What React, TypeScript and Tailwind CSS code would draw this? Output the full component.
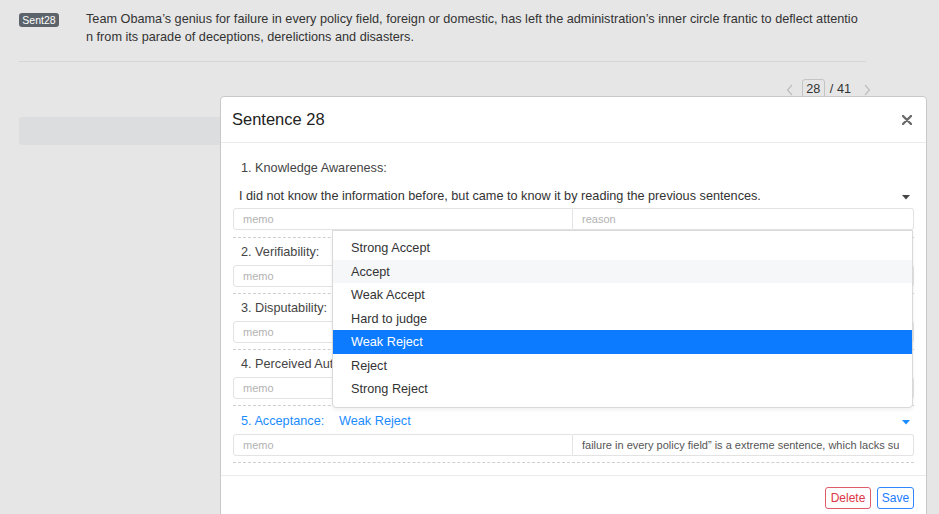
import React from "react";

const font = { fontFamily: '"Liberation Sans", Arial, sans-serif' };

const options = [
  "Strong Accept",
  "Accept",
  "Weak Accept",
  "Hard to judge",
  "Weak Reject",
  "Reject",
  "Strong Reject",
];

function Caret({ color }: { color: string }) {
  return (
    <svg width="8" height="5" viewBox="0 0 8 5" className="shrink-0">
      <path d="M0 0 L8 0 L4 4.5 Z" fill={color} />
    </svg>
  );
}

function InputPair({ reason }: { reason?: string }) {
  return (
    <div className="flex h-[22px] mt-[1px]">
      <div className="w-[340px] h-full border border-[#e3e3e3] rounded-l-[3px] flex items-center pl-[9px] text-[11px] text-[#b2b2b2]">
        memo
      </div>
      <div
        className={
          "flex-1 min-w-0 h-full border border-l-0 border-[#e3e3e3] rounded-r-[3px] flex items-center pl-[9px] text-[11px] overflow-hidden whitespace-nowrap " +
          (reason ? "text-[#555]" : "text-[#b2b2b2]")
        }
      >
        <span className="overflow-hidden">{reason ?? "reason"}</span>
      </div>
    </div>
  );
}

// labels 2-4 sit partly under the open dropdown, so only the visible part is drawn
function Section({ label }: { label: string }) {
  return (
    <div className="border-b border-dashed border-[#cfcfcf] pb-[6px]">
      <div className="h-[26px] pt-[4px] flex items-center pl-[8px] text-[12.7px] text-[#444]">
        <span className="w-[91px] overflow-hidden whitespace-nowrap">{label}</span>
      </div>
      <InputPair />
    </div>
  );
}

export default function App() {
  return (
    <div
      className="relative w-[939px] h-[514px] overflow-hidden bg-[#e6e6e6] text-[#333]"
      style={font}
    >
      {/* page behind the modal */}
      <div className="px-[19px] pt-[10px]">
        <div className="flex items-start">
          <span className="mt-[3px] w-[40px] h-[14px] rounded-[3px] bg-[#5d636a] text-white text-[10.5px] leading-[14px] text-center">
            Sent28
          </span>
          <div className="ml-[27px] text-[12.7px] leading-[18px] text-[#333]">
            <div className="whitespace-nowrap">
              Team Obama’s genius for failure in every policy field, foreign or domestic, has left the administration’s inner circle frantic to deflect attentio
            </div>
            <div className="whitespace-nowrap">
              n from its parade of deceptions, derelictions and disasters.
            </div>
          </div>
        </div>
        <div className="mt-[15px] w-[847px] border-t border-[#d6d6d6]" />
        <div className="w-[852px] flex justify-end items-center mt-[17px] text-[12.7px] text-[#333]">
          <svg width="8" height="12" viewBox="0 0 8 12" className="mr-[8px]">
            <polyline points="6,1 1.5,6 6,11" fill="none" stroke="#bdbdbd" strokeWidth="1.2" />
          </svg>
          <span className="w-[23px] h-[22px] border border-[#c4c4c4] rounded-[3px] flex items-center justify-center">
            28
          </span>
          <span className="ml-[5px]">/ 41</span>
          <svg width="8" height="12" viewBox="0 0 8 12" className="ml-[12px]">
            <polyline points="2,1 6.5,6 2,11" fill="none" stroke="#bdbdbd" strokeWidth="1.2" />
          </svg>
        </div>
        <div className="mt-[16px] h-[28px] w-[800px] bg-[#dcdddf] rounded-[3px]" />
      </div>

      {/* modal */}
      <div className="absolute left-[220px] top-[96px] w-[707px] h-[440px] bg-white border border-[#c9c9c9] rounded-[4px]">
        <div className="h-[46px] border-b border-[#e9ecef] flex items-center justify-between pl-[11px] pr-[14px]">
          <span className="text-[16.5px] text-[#222]">Sentence 28</span>
          <svg width="10" height="10" viewBox="0 0 10 10">
            <path d="M1 1 L9 9 M9 1 L1 9" stroke="#6b6b6b" strokeWidth="2.4" strokeLinecap="round" />
          </svg>
        </div>

        <div className="relative px-[12px] pt-[11px] pb-[12px]">
          <div className="border-b border-dashed border-[#cfcfcf] pb-[7px]">
            <div className="h-[26px] pt-[4px] flex items-center pl-[8px] text-[12.7px] text-[#444]">
              1. Knowledge Awareness:
            </div>
            <div className="mt-[2px] h-[26px] pt-[4px] flex items-center justify-between pl-[6px] pr-[4px] text-[12.7px] text-[#333]">
              <span>
                I did not know the information before, but came to know it by reading the previous sentences.
              </span>
              <Caret color="#444" />
            </div>
            <div className="flex h-[22px]">
              <div className="w-[340px] h-full border border-[#e3e3e3] rounded-l-[3px] flex items-center pl-[9px] text-[11px] text-[#b2b2b2]">
                memo
              </div>
              <div className="flex-1 h-full border border-l-0 border-[#e3e3e3] rounded-r-[3px] flex items-center pl-[9px] text-[11px] text-[#b2b2b2]">
                reason
              </div>
            </div>
          </div>
          <Section label="2. Verifiability:" />
          <Section label="3. Disputability:" />
          <Section label="4. Perceived Authority:" />
          <div className="border-b border-dashed border-[#cfcfcf] pb-[6px]">
            <div className="mt-[1px] h-[26px] pt-[4px] flex items-center justify-between pl-[8px] pr-[4px] text-[12.7px] text-[#1a8cff]">
              <span className="flex">
                <span className="w-[98px]">5. Acceptance:</span>
                <span>Weak Reject</span>
              </span>
              <Caret color="#1a8cff" />
            </div>
            <InputPair reason={"failure in every policy field” is a extreme sentence, which lacks su"} />
          </div>

          {/* open dropdown */}
          <div className="absolute left-[111px] top-[87px] w-[581px] h-[178px] bg-white border border-[#d9d9d9] rounded-b-[4px] shadow-[0_2px_4px_rgba(0,0,0,0.06)] pt-[5px] pb-[6px]">
            {options.map((o, i) => (
              <div
                key={o}
                className={
                  "h-[23.5px] pt-[2px] flex items-center pl-[18px] text-[12.7px] " +
                  (i === 4
                    ? "bg-[#0d7bff] text-white"
                    : i === 1
                    ? "bg-[#f6f7f9] text-[#333]"
                    : "text-[#333]")
                }
              >
                {o}
              </div>
            ))}
          </div>
        </div>

        <div className="border-t border-[#e9ecef] flex justify-end gap-[6px] pt-[11px] pr-[12px]">
          <button className="h-[22px] w-[46px] border border-[#e05b68] rounded-[3px] text-[12px] text-[#dc3545]">
            Delete
          </button>
          <button className="h-[22px] w-[37px] border border-[#2f86ff] rounded-[3px] text-[12px] text-[#1a7cff]">
            Save
          </button>
        </div>
      </div>
    </div>
  );
}
